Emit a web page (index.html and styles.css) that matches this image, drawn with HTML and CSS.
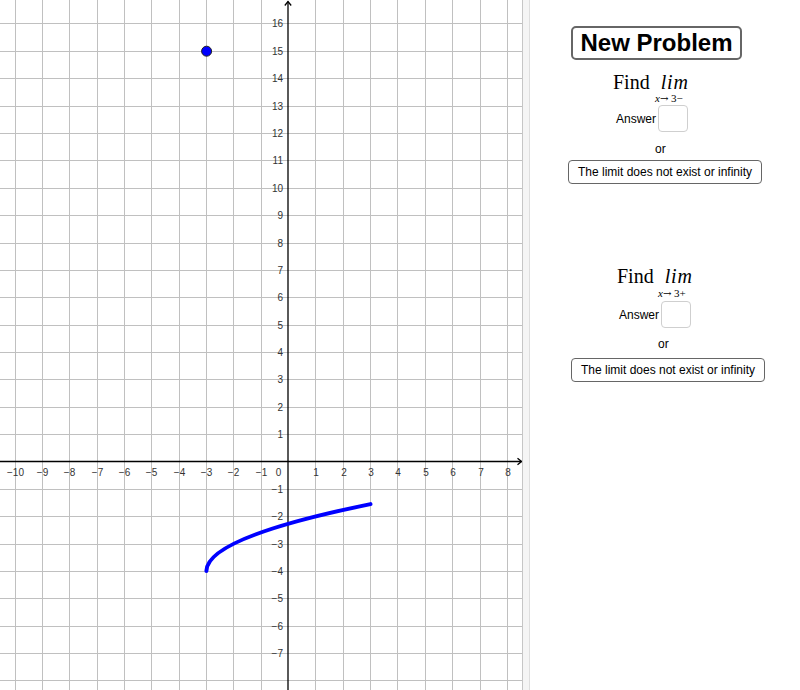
FILE: index.html
```html
<!DOCTYPE html>
<html lang="en">
<head>
<meta charset="utf-8">
<title>Limits</title>
<link rel="stylesheet" href="styles.css">
</head>
<body>
<div class="app">
  <svg class="graph" width="522" height="690" viewBox="0 0 522 690" xmlns="http://www.w3.org/2000/svg">
    <g class="grid">
      <line x1="15.5" y1="0" x2="15.5" y2="690"/>
      <line x1="42.5" y1="0" x2="42.5" y2="690"/>
      <line x1="69.5" y1="0" x2="69.5" y2="690"/>
      <line x1="97.5" y1="0" x2="97.5" y2="690"/>
      <line x1="124.5" y1="0" x2="124.5" y2="690"/>
      <line x1="151.5" y1="0" x2="151.5" y2="690"/>
      <line x1="179.5" y1="0" x2="179.5" y2="690"/>
      <line x1="206.5" y1="0" x2="206.5" y2="690"/>
      <line x1="233.5" y1="0" x2="233.5" y2="690"/>
      <line x1="261.5" y1="0" x2="261.5" y2="690"/>
      <line x1="315.5" y1="0" x2="315.5" y2="690"/>
      <line x1="343.5" y1="0" x2="343.5" y2="690"/>
      <line x1="370.5" y1="0" x2="370.5" y2="690"/>
      <line x1="397.5" y1="0" x2="397.5" y2="690"/>
      <line x1="425.5" y1="0" x2="425.5" y2="690"/>
      <line x1="452.5" y1="0" x2="452.5" y2="690"/>
      <line x1="480.5" y1="0" x2="480.5" y2="690"/>
      <line x1="507.5" y1="0" x2="507.5" y2="690"/>
      <line x1="0" y1="23.5" x2="522" y2="23.5"/>
      <line x1="0" y1="51.5" x2="522" y2="51.5"/>
      <line x1="0" y1="78.5" x2="522" y2="78.5"/>
      <line x1="0" y1="106.5" x2="522" y2="106.5"/>
      <line x1="0" y1="133.5" x2="522" y2="133.5"/>
      <line x1="0" y1="160.5" x2="522" y2="160.5"/>
      <line x1="0" y1="188.5" x2="522" y2="188.5"/>
      <line x1="0" y1="215.5" x2="522" y2="215.5"/>
      <line x1="0" y1="243.5" x2="522" y2="243.5"/>
      <line x1="0" y1="270.5" x2="522" y2="270.5"/>
      <line x1="0" y1="297.5" x2="522" y2="297.5"/>
      <line x1="0" y1="325.5" x2="522" y2="325.5"/>
      <line x1="0" y1="352.5" x2="522" y2="352.5"/>
      <line x1="0" y1="379.5" x2="522" y2="379.5"/>
      <line x1="0" y1="407.5" x2="522" y2="407.5"/>
      <line x1="0" y1="434.5" x2="522" y2="434.5"/>
      <line x1="0" y1="489.5" x2="522" y2="489.5"/>
      <line x1="0" y1="516.5" x2="522" y2="516.5"/>
      <line x1="0" y1="544.5" x2="522" y2="544.5"/>
      <line x1="0" y1="571.5" x2="522" y2="571.5"/>
      <line x1="0" y1="598.5" x2="522" y2="598.5"/>
      <line x1="0" y1="626.5" x2="522" y2="626.5"/>
      <line x1="0" y1="653.5" x2="522" y2="653.5"/>
      <line x1="0" y1="680.5" x2="522" y2="680.5"/>
    </g>
    <g class="axes">
      <line x1="288" y1="1.5" x2="288" y2="690"/>
      <line x1="0" y1="461.5" x2="521.5" y2="461.5"/>
      <polyline points="284.8,5.5 288,1.5 291.2,5.5"/>
      <polyline points="517.5,458.3 521.5,461.5 517.5,464.7"/>
    </g>
    <g class="ticks-x">
      <text x="15.5" y="476">−10</text>
      <text x="42.5" y="476">−9</text>
      <text x="69.5" y="476">−8</text>
      <text x="97.5" y="476">−7</text>
      <text x="124.5" y="476">−6</text>
      <text x="151.5" y="476">−5</text>
      <text x="179.5" y="476">−4</text>
      <text x="206.5" y="476">−3</text>
      <text x="233.5" y="476">−2</text>
      <text x="261.5" y="476">−1</text>
      <text x="278.5" y="476">0</text>
      <text x="316" y="476">1</text>
      <text x="344" y="476">2</text>
      <text x="371" y="476">3</text>
      <text x="398" y="476">4</text>
      <text x="426" y="476">5</text>
      <text x="453" y="476">6</text>
      <text x="481" y="476">7</text>
      <text x="508" y="476">8</text>
    </g>
    <g class="ticks-y">
      <text x="283" y="27.2">16</text>
      <text x="283" y="55.2">15</text>
      <text x="283" y="82.2">14</text>
      <text x="283" y="110.2">13</text>
      <text x="283" y="137.2">12</text>
      <text x="283" y="164.2">11</text>
      <text x="283" y="192.2">10</text>
      <text x="283" y="219.2">9</text>
      <text x="283" y="247.2">8</text>
      <text x="283" y="274.2">7</text>
      <text x="283" y="301.2">6</text>
      <text x="283" y="329.2">5</text>
      <text x="283" y="356.2">4</text>
      <text x="283" y="383.2">3</text>
      <text x="283" y="411.2">2</text>
      <text x="283" y="438.2">1</text>
      <text x="283" y="493.2">−1</text>
      <text x="283" y="520.2">−2</text>
      <text x="283" y="548.2">−3</text>
      <text x="283" y="575.2">−4</text>
      <text x="283" y="602.2">−5</text>
      <text x="283" y="630.2">−6</text>
      <text x="283" y="657.2">−7</text>
    </g>
    <path class="curve" d="M 206.4 571.1 Q 206.4 537.6 370.5 504.1"/>
    <circle class="point" cx="206.6" cy="51.2" r="5"/>
  </svg>
  <div class="divider"></div>
  <div class="panel">
    <button class="btn-new" type="button">New Problem</button>

    <section class="limit limit--minus">
      <div class="find-row"><span>Find</span><i class="lim">lim</i></div>
      <div class="sub"><i>x</i><span class="arrow">→</span> 3−</div>
      <div class="answer-row"><span class="answer-label">Answer</span><input class="answer-input" type="text" aria-label="Answer"></div>
      <div class="or">or</div>
      <button class="btn-dne" type="button">The limit does not exist or infinity</button>
    </section>

    <section class="limit limit--plus">
      <div class="find-row"><span>Find</span><i class="lim">lim</i></div>
      <div class="sub"><i>x</i><span class="arrow">→</span> 3+</div>
      <div class="answer-row"><span class="answer-label">Answer</span><input class="answer-input" type="text" aria-label="Answer"></div>
      <div class="or">or</div>
      <button class="btn-dne" type="button">The limit does not exist or infinity</button>
    </section>
  </div>
</div>
</body>
</html>
```

FILE: styles.css
```css
html, body {
  margin: 0;
  padding: 0;
  background: #ffffff;
}

body {
  font-family: "Liberation Sans", Arial, sans-serif;
  color: #000;
}

.app {
  display: flex;
  width: 800px;
  height: 690px;
  overflow: hidden;
}

.graph {
  display: block;
  flex: 0 0 522px;
}

.grid line {
  stroke: #c0c0c0;
  stroke-width: 1;
  shape-rendering: crispEdges;
}

.axes line,
.axes polyline {
  stroke: #000;
  stroke-width: 1.3;
  fill: none;
}

.ticks-x text,
.ticks-y text {
  font-family: "Liberation Sans", Arial, sans-serif;
  font-size: 10px;
  fill: #333;
}

.ticks-x text {
  text-anchor: middle;
}

.ticks-y text {
  text-anchor: end;
}

.curve {
  fill: none;
  stroke: #0000ff;
  stroke-width: 4;
  stroke-linecap: round;
}

.point {
  fill: #0000ff;
  stroke: #222;
  stroke-width: 1;
}

.divider {
  flex: 0 0 8px;
  box-sizing: border-box;
  height: 690px;
  background: #f5f5f5;
  border-left: 1px solid #c6c6c6;
  border-right: 1px solid #dedede;
}

.panel {
  flex: 1 1 auto;
  display: flex;
  flex-direction: column;
  align-items: flex-start;
  padding-top: 26px;
  background: #fff;
}

.btn-new {
  margin: 0 0 0 41px;
  padding: 0;
  box-sizing: border-box;
  width: 171px;
  height: 34px;
  border: 2px solid #666;
  border-radius: 5px;
  background: #fff;
  color: #000;
  font-family: "Liberation Sans", Arial, sans-serif;
  font-weight: bold;
  font-size: 24px;
  line-height: 30px;
}

.limit {
  display: flex;
  flex-direction: column;
  align-items: flex-start;
}

.find-row {
  display: flex;
  align-items: baseline;
  height: 18px;
  line-height: 18px;
  margin-left: 83px;
  font-family: "Liberation Serif", "Times New Roman", serif;
  font-size: 20px;
}

.lim {
  margin-left: 11px;
  letter-spacing: 0.8px;
}

.sub {
  height: 10px;
  line-height: 10px;
  margin-top: 2px;
  margin-left: 125px;
  font-family: "Liberation Serif", "Times New Roman", serif;
  font-size: 11px;
  white-space: nowrap;
}

.arrow {
  font-family: "DejaVu Serif", serif;
  font-size: 10px;
}

.answer-row {
  display: flex;
  align-items: center;
  margin-left: 86px;
  margin-top: 2px;
}

.answer-label {
  font-size: 12px;
}

.answer-input {
  box-sizing: border-box;
  width: 30px;
  height: 27px;
  margin: 0 0 0 2px;
  padding: 0;
  border: 1px solid #cfcfcf;
  border-radius: 4px;
  background: #fff;
}

.or {
  margin-left: 125px;
  margin-top: 10px;
  font-size: 12px;
  line-height: 14px;
}

.btn-dne {
  margin: 4px 0 0 38px;
  padding: 0;
  box-sizing: border-box;
  width: 194px;
  height: 24px;
  border: 1.5px solid #666;
  border-radius: 4px;
  background: #fff;
  color: #000;
  font-family: "Liberation Sans", Arial, sans-serif;
  font-size: 12px;
}

.limit--minus .find-row {
  margin-top: 13px;
}

.limit--plus {
  padding-left: 3px;
}

.limit--plus .find-row {
  margin-top: 83px;
  margin-left: 84px;
}

.limit--plus .sub {
  margin-top: 3px;
}

.limit--plus .answer-row {
  margin-top: 3px;
}

.limit--plus .or {
  margin-top: 9px;
}

.limit--plus .btn-dne {
  margin-top: 7px;
}
```
